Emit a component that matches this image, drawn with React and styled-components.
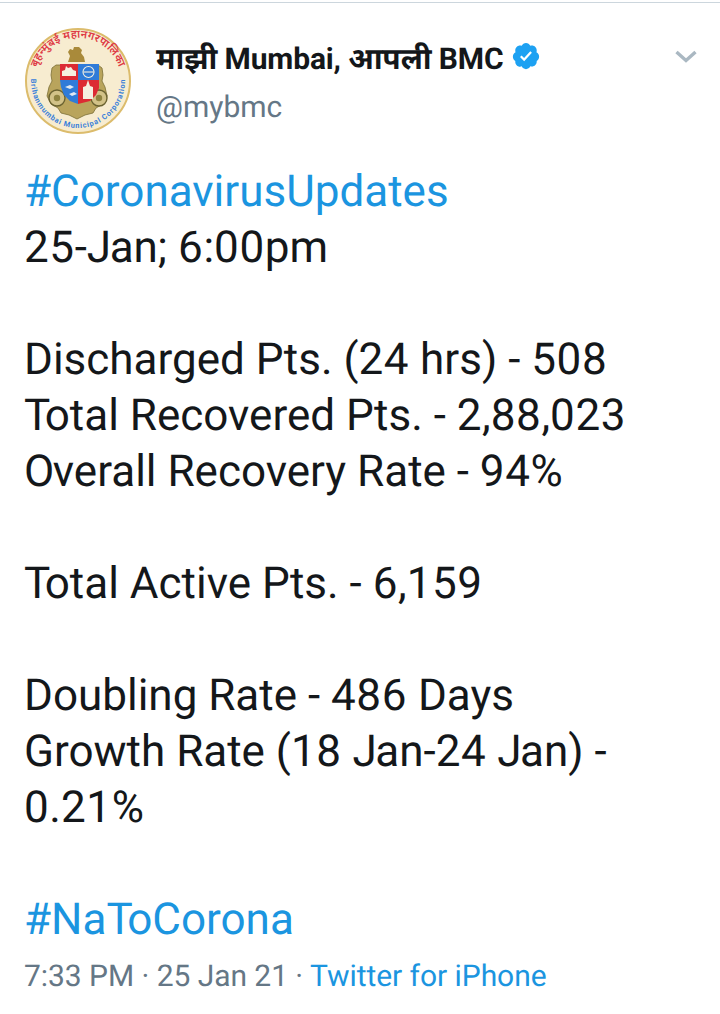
import React from "react";
import styled, { createGlobalStyle } from "styled-components";

const Global = createGlobalStyle`
  html, body { margin: 0; padding: 0; background: #fff; }
  body {
    font-family: Roboto, "Noto Sans", sans-serif;
    text-rendering: geometricPrecision;
    font-kerning: normal;
  }
`;

const Page = styled.div`
  width: 720px;
  height: 1014px;
  box-sizing: border-box;
  overflow: hidden;
  background: #fff;
  padding-top: 2px;
`;
const TopRule = styled.div`
  height: 1px;
  background: #ccd6dd;
`;
const Tweet = styled.article`
  padding: 25px 24px 0 25px;
`;
const Header = styled.header`
  display: flex;
  align-items: flex-start;
`;
const Avatar = styled.svg`
  width: 106px;
  height: 106px;
  flex: none;
  display: block;
`;
const Identity = styled.div`
  flex: 1;
  margin-left: 25px;
  padding-top: 7px;
`;
const NameRow = styled.div`
  display: flex;
  align-items: center;
  height: 44px;
`;
const Name = styled.span`
  font-size: 30px;
  font-weight: 700;
  letter-spacing: -0.15px;
  color: #14171a;
`;
const Handle = styled.div`
  margin-top: 7px;
  font-size: 30px;
  line-height: 44px;
  color: #657786;
`;
const Badge = styled.svg`
  width: 30px;
  height: 30px;
  margin: 0 0 3px 8px;
`;
const Caret = styled.svg`
  width: 24px;
  height: 14px;
  flex: none;
  margin: 21px -2px 0 0;
`;
const Body = styled.div`
  margin: 29px 0 0 -1px;
  font-size: 44px;
  line-height: 56px;
  color: #14171a;
`;
const Line = styled.div`
  min-height: 56px;
`;
const Tag = styled.span`
  color: #1b95e0;
`;
const Digits = styled.span`
  letter-spacing: 0.6px;
`;
const Kerned = styled.span`
  letter-spacing: ${(p) => p.$by}px;
`;
const Meta = styled.div`
  margin: 2px 0 0 -1px;
  font-size: 30px;
  line-height: 56px;
  letter-spacing: -0.05px;
  color: #657786;
`;
const Source = styled.span`
  color: #1b95e0;
`;

const KERN = { T: -5.5, J: -1.5, O: -1.5 };

function Tuned({ text }) {
  return text.split(/(\d+|T(?=o)|J(?=a)|O(?=v))/).map((part, i) => {
    if (/^\d+$/.test(part)) return <Digits key={i}>{part}</Digits>;
    if (KERN[part]) return <Kerned key={i} $by={KERN[part]}>{part}</Kerned>;
    return part;
  });
}

const lines = [
  { tag: true, text: "#CoronavirusUpdates" },
  { text: "25-Jan; 6:00pm" },
  { text: "" },
  { text: "Discharged Pts. (24 hrs) - 508" },
  { text: "Total Recovered Pts. - 2,88,023" },
  { text: "Overall Recovery Rate - 94%" },
  { text: "" },
  { text: "Total Active Pts. - 6,159" },
  { text: "" },
  { text: "Doubling Rate - 486 Days" },
  { text: "Growth Rate (18 Jan-24 Jan) -" },
  { text: "0.21%" },
  { text: "" },
  { tag: true, text: "#NaToCorona" },
];

function Logo() {
  return (
    <Avatar viewBox="0 0 106 106">
      <defs>
        <path id="arcTop" d="M11 62 A43 43 0 1 1 95 62" />
        <path id="arcBottom" d="M6 53 A47 47 0 0 0 100 53" />
      </defs>
      <circle cx="53" cy="53" r="52" fill="#f7ecd0" stroke="#dcbc6c" strokeWidth="2" />
      <text fontFamily="Noto Sans, sans-serif" fontSize="11" fontWeight="600" fill="#de3a44" letterSpacing="0.2">
        <textPath href="#arcTop" startOffset="50%" textAnchor="middle">बृहन्मुंबई महानगरपालिका</textPath>
      </text>
      <text fontFamily="Roboto, sans-serif" fontSize="7.4" fontWeight="700" fill="#3a80da" letterSpacing="0.8">
        <textPath href="#arcBottom" startOffset="50%" textAnchor="middle">Brihanmumbai Municipal Corporation</textPath>
      </text>
      {/* lion crest */}
      <path d="M43 34l2-6-2-4 2-3 3 1 1-3 5 0 3 3-1 3 3 4 1 5z" fill="#a98a3a" />
      {/* wreath */}
      <path d="M31 37l-4 3-1 7 1 6-3 6-2 9 4 8 7 4 3 5 8 2 8 4 8-4 8-2 3-5 7-4 4-8-2-9-3-6 1-6-1-7-4-3z" fill="#b9a45c" stroke="#7b6f36" strokeWidth="0.8" />
      <circle cx="32" cy="70" r="8" fill="#d2c288" stroke="#6a6230" strokeWidth="1.4" />
      <circle cx="32" cy="70" r="3.2" fill="#8f8340" />
      <circle cx="74" cy="70" r="8" fill="#d2c288" stroke="#6a6230" strokeWidth="1.4" />
      <circle cx="74" cy="70" r="3.2" fill="#8f8340" />
      {/* shield */}
      <path d="M35 36h18v16H35z" fill="#dc2a33" />
      <path d="M53 36h21v16H53z" fill="#2f7bd8" />
      <path d="M35 52h18v24l-8-3-6-6-3-8z" fill="#2f7bd8" />
      <path d="M53 52h21v8l-3 7-6 6-12 3z" fill="#dc2a33" />
      <path d="M37 48v-5l3-1 1-4 2 2 3-1 2 3 3 1v5z" fill="#f5efe0" />
      <circle cx="63.5" cy="44" r="5.5" fill="none" stroke="#f5efe0" strokeWidth="1.1" />
      <path d="M58.5 44h10" stroke="#f5efe0" strokeWidth="1.1" />
      <path d="M40 59l5-2 4 2-4 2zM44 66l5-2 3 2-5 2z" fill="#dfe8f2" />
      <path d="M58 71V59l3-1 2-6 2 6 3 1v12z" fill="#f5efe0" />
    </Avatar>
  );
}

export default function App() {
  return (
    <Page>
      <Global />
      <TopRule />
      <Tweet>
        <Header>
          <Logo />
          <Identity>
            <NameRow>
              <Name>माझी Mumbai, आपली BMC</Name>
              <Badge viewBox="0 0 24 24">
                <path
                  fill="#1da1f2"
                  d="M22.5 12.5c0-1.58-.875-2.95-2.148-3.6.154-.435.238-.905.238-1.4 0-2.21-1.71-3.998-3.818-3.998-.47 0-.92.084-1.336.25C14.818 2.415 13.51 1.5 12 1.5s-2.816.917-3.437 2.25c-.415-.165-.866-.25-1.336-.25-2.11 0-3.818 1.79-3.818 4 0 .494.083.964.237 1.4-1.272.65-2.147 2.018-2.147 3.6 0 1.495.782 2.798 1.942 3.486-.02.17-.032.34-.032.514 0 2.21 1.708 4 3.818 4 .47 0 .92-.086 1.335-.25.62 1.334 1.926 2.25 3.437 2.25 1.512 0 2.818-.916 3.437-2.25.415.163.865.248 1.336.248 2.11 0 3.818-1.79 3.818-4 0-.174-.012-.344-.033-.513 1.158-.687 1.943-1.99 1.943-3.484z"
                />
                <path fill="#fff" d="M10.54 16.2 7.2 12.88l1.25-1.26 2.02 2.02 4.95-5.39 1.31 1.2z" />
              </Badge>
            </NameRow>
            <Handle>@mybmc</Handle>
          </Identity>
          <Caret viewBox="0 0 24 14">
            <path d="M2.5 3l9.5 8.5L21.5 3" fill="none" stroke="#aab8c2" strokeWidth="3.4" />
          </Caret>
        </Header>
        <Body>
          {lines.map((l, i) => (
            <Line key={i}>
              {l.tag ? <Tag><Tuned text={l.text} /></Tag> : <Tuned text={l.text} />}
            </Line>
          ))}
        </Body>
        <Meta>
          7:33 PM · 25 Jan 21 · <Source>Twitter for iPhone</Source>
        </Meta>
      </Tweet>
    </Page>
  );
}
